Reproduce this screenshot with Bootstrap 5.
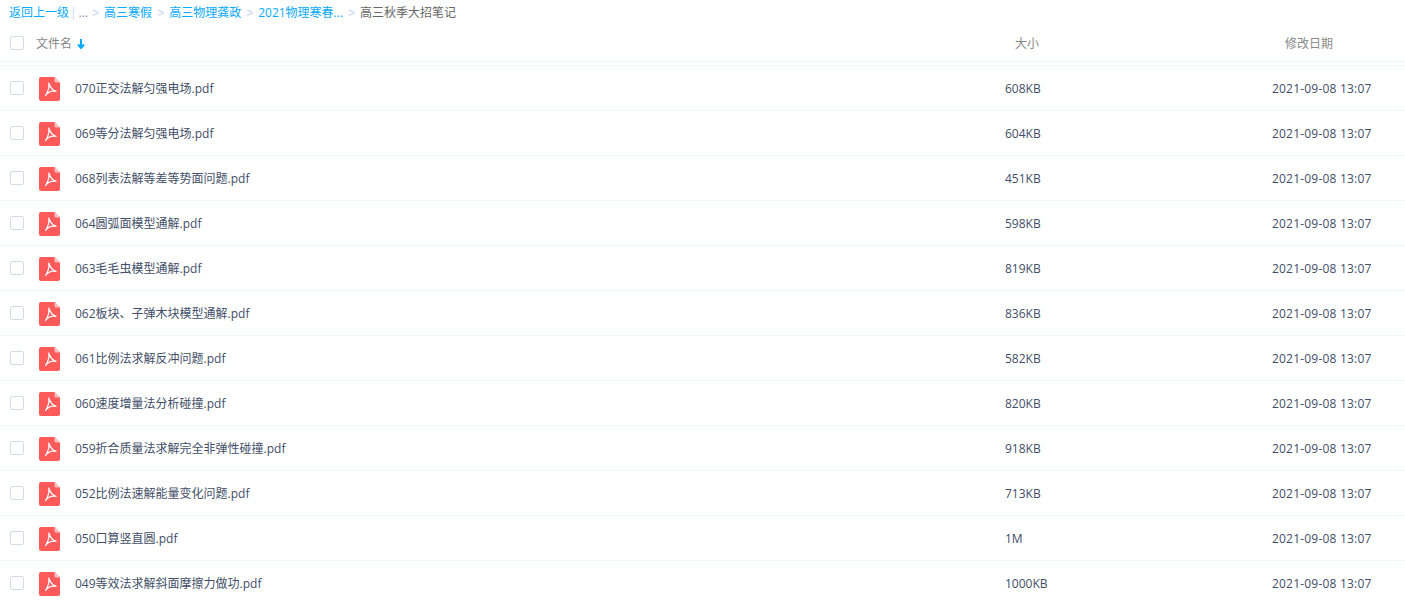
<!DOCTYPE html>
<html lang="zh-CN">
  <head>
    <meta charset="UTF-8" />
    <title>高三秋季大招笔记</title>
    <link href="https://cdn.jsdelivr.net/npm/bootstrap@5.3.2/dist/css/bootstrap.min.css" rel="stylesheet" />
    <style>
      html, body { height: 605px; overflow: hidden; }
      body {
        background: #fff;
        font-family: "Open Sans", "Noto Sans CJK SC", sans-serif;
        font-size: 12px;
        color: #424e67;
      }
      .crumbs { height: 24px; padding-left: 9px; line-height: 26px; white-space: nowrap; }
      .crumbs a { color: #09aaff; text-decoration: none; }
      .crumb-sep { color: #c5d8f3; margin: 0 5px; font-family: "Liberation Sans", sans-serif; }
      .crumb-dim { color: #c5d8f3; margin: 0 2px 0 1px; }
      .crumb-more { color: #878c9c; margin-right: -1px; }
      .crumb-now { color: #666; }
      .head-row { height: 38px; color: #888; border-bottom: 1px solid #f2f6fd; }
      .file-row { height: 45px; border-bottom: 1px solid #f2f6fd; }
      .file-list { margin-top: 3px; border-top: 1px solid #f2f6fd; }
      .tick {
        width: 14px; height: 14px; margin-left: 10px; flex: none;
        border: 1px solid #d5dbe6; border-radius: 2px; background: #fff;
      }
      .pdf-icon { width: 21px; height: 24px; margin: 2px 0 0 15px; flex: none; display: block; }
      .name-col { flex: 1 1 0; min-width: 0; }
      .name-col, .size-col, .date-col { padding-top: 2px; }
      .file-row .name-col { padding-left: 15px; }
      .head-row .name-col { padding-left: 12px; }
      .size-col { width: 267px; flex: none; }
      .date-col { width: 133px; flex: none; }
      .file-row .date-col { letter-spacing: 0.2px; }
      .head-row .size-col { padding-left: 10px; }
      .head-row .date-col { padding-left: 13px; }
      .sort-arrow { width: 8px; height: 10px; margin-left: 5px; vertical-align: -1px; }
    </style>
  </head>
  <body>
    <div class="crumbs">
      <a href="#">返回上一级</a><span class="crumb-dim">|</span><span class="crumb-more">...</span><span class="crumb-sep">&gt;</span><a href="#">高三寒假</a><span class="crumb-sep">&gt;</span><a href="#">高三物理龚政</a><span class="crumb-sep">&gt;</span><a href="#">2021物理寒春...</a><span class="crumb-sep">&gt;</span><span class="crumb-now">高三秋季大招笔记</span>
    </div>
    <div class="head-row d-flex align-items-center">
      <span class="tick"></span>
      <div class="name-col">文件名<svg class="sort-arrow" viewBox="0 0 8 10"><path d="M4 0v9M1 5.500 4 9l3-3.500" fill="none" stroke="#09aaff" stroke-width="2"/></svg></div>
      <div class="size-col">大小</div>
      <div class="date-col">修改日期</div>
    </div>
    <div class="file-list" id="files"></div>

    <script>
      const files = [
        ["070正交法解匀强电场.pdf", "608KB"],
        ["069等分法解匀强电场.pdf", "604KB"],
        ["068列表法解等差等势面问题.pdf", "451KB"],
        ["064圆弧面模型通解.pdf", "598KB"],
        ["063毛毛虫模型通解.pdf", "819KB"],
        ["062板块、子弹木块模型通解.pdf", "836KB"],
        ["061比例法求解反冲问题.pdf", "582KB"],
        ["060速度增量法分析碰撞.pdf", "820KB"],
        ["059折合质量法求解完全非弹性碰撞.pdf", "918KB"],
        ["052比例法速解能量变化问题.pdf", "713KB"],
        ["050口算竖直圆.pdf", "1M"],
        ["049等效法求解斜面摩擦力做功.pdf", "1000KB"],
      ];
      const icon =
        '<svg class="pdf-icon" viewBox="0 0 21 24">' +
        '<path d="M2 0h13.500L21 5.500V22a2 2 0 0 1-2 2H2a2 2 0 0 1-2-2V2a2 2 0 0 1 2-2z" fill="#ff5a5a"/>' +
        '<path d="M15.500 0 21 5.500h-4a1.500 1.500 0 0 1-1.500-1.500z" fill="#ffbdbd"/>' +
        '<path d="M9.800 6c.9 3.500 3 6.600 7.200 8.400-3.900-.7-7.700.3-10.400 4.100 2.300-3.600 3.900-7.800 3.200-12.500z" fill="none" stroke="#fff" stroke-width="1.200" stroke-linejoin="round"/>' +
        "</svg>";
      document.getElementById("files").innerHTML = files
        .map(
          (f) =>
            '<div class="file-row d-flex align-items-center"><span class="tick"></span>' +
            icon +
            '<div class="name-col">' + f[0] + "</div>" +
            '<div class="size-col">' + f[1] + "</div>" +
            '<div class="date-col">2021-09-08 13:07</div></div>'
        )
        .join("");
    </script>
    <script src="https://cdn.jsdelivr.net/npm/bootstrap@5.3.2/dist/js/bootstrap.bundle.min.js"></script>
  </body>
</html>
